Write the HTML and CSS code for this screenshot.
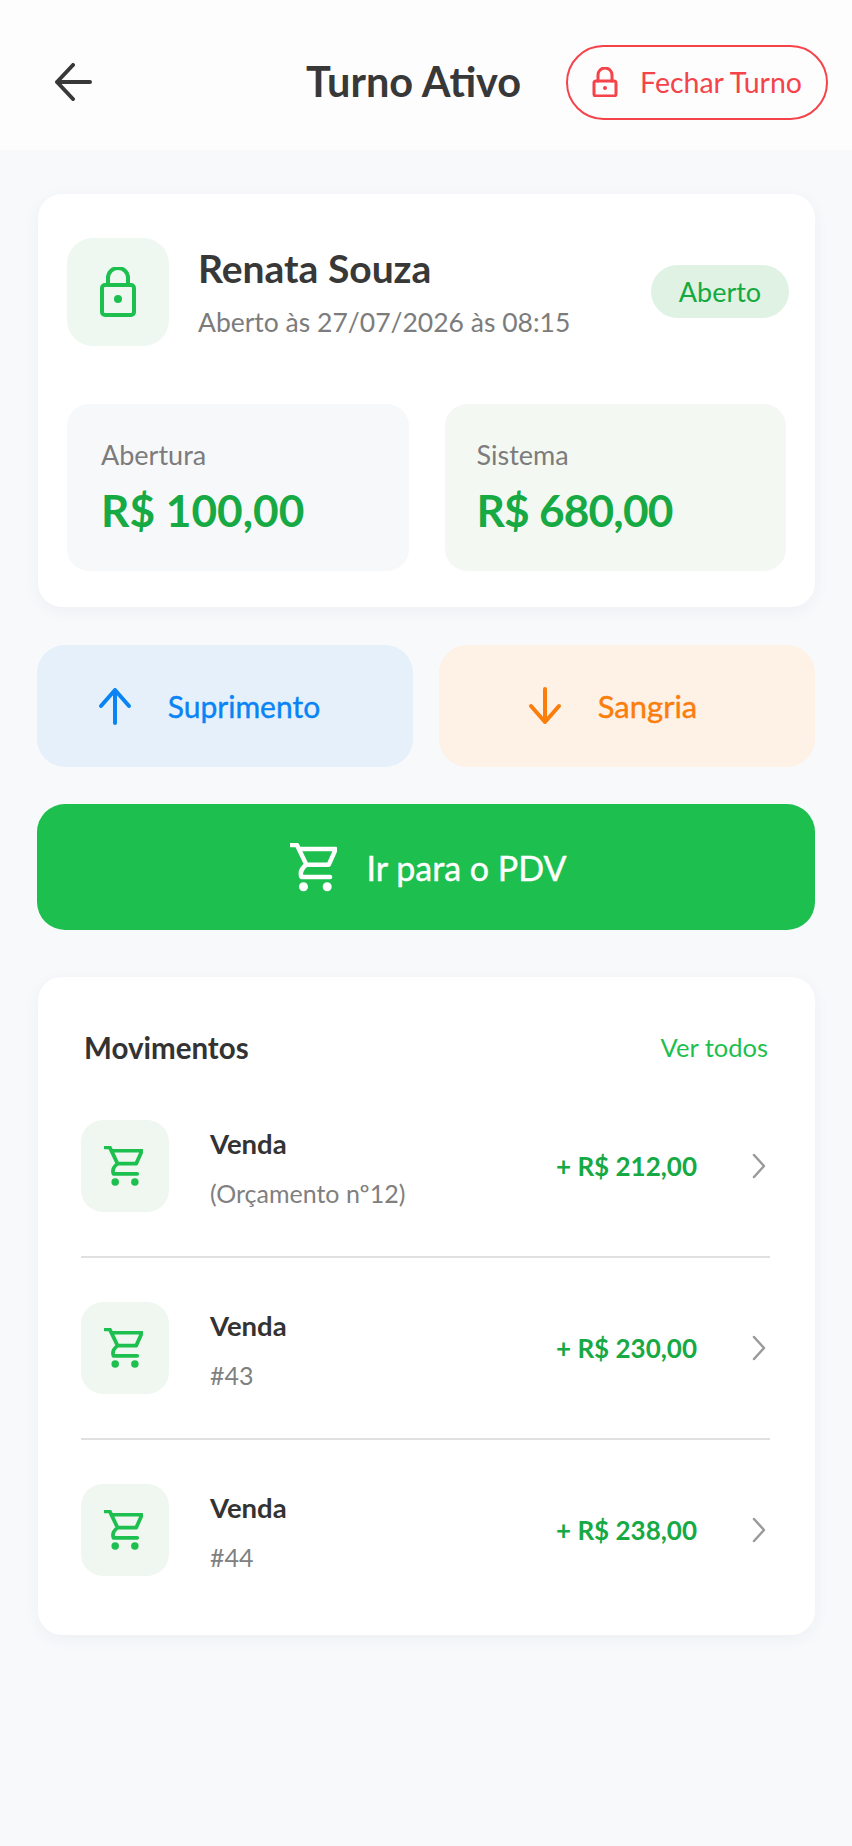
FILE: index.html
```html
<!DOCTYPE html>
<html>
<head>
	<meta charset="utf-8">
	<title>Turno Ativo</title>
	<link rel="stylesheet" href="styles.css">
</head>
<body>
	<header class="topbar">
		<svg class="back" viewBox="0 0 38 38"><path d="M36 19H3M19 2L3 19l16 17"/></svg>
		<h1 class="title">Turno Ativo</h1>
		<div class="close-btn">
			<svg class="lock-sm" viewBox="0 0 26 30"><path d="M6 14V8a7 7 0 0 1 14 0v6"/><rect x="2" y="14" width="22" height="15" rx="2"/><circle class="dot" cx="13" cy="21" r="2"/></svg>
			<span>Fechar Turno</span>
		</div>
	</header>

	<main class="content">
		<section class="card shift">
			<div class="shift-top">
				<div class="lock-box">
					<svg class="lock-lg" viewBox="0 0 36 50"><path d="M8 18V11a10 10 0 0 1 20 0v7"/><rect x="2" y="18" width="32" height="30" rx="3"/><circle class="dot" cx="18" cy="32" r="4"/></svg>
				</div>
				<div class="shift-info">
					<div class="name">Renata Souza</div>
					<div class="since">Aberto às 27/07/2026 às 08:15</div>
				</div>
				<span class="badge">Aberto</span>
			</div>
			<div class="stats">
				<div class="stat">
					<div class="stat-label">Abertura</div>
					<div class="stat-value">R$ 100,00</div>
				</div>
				<div class="stat stat-green">
					<div class="stat-label">Sistema</div>
					<div class="stat-value">R$ 680,00</div>
				</div>
			</div>
		</section>

		<div class="actions">
			<div class="action action-blue">
				<svg viewBox="0 0 34 38"><path d="M17 36V3M3 19L17 3l14 16"/></svg>
				<span>Suprimento</span>
			</div>
			<div class="action action-orange">
				<svg viewBox="0 0 34 38"><path d="M17 2v33M3 19l14 16 14-16"/></svg>
				<span>Sangria</span>
			</div>
		</div>

		<div class="pdv">
			<svg class="cart cart-lg" viewBox="0 0 115 118"><path d="M3 4H17L40 52H95L112 14H22M40 52Q22 66 28 82H98"/><circle class="dot" cx="33" cy="106" r="11"/><circle class="dot" cx="91" cy="106" r="11"/></svg>
			<span>Ir para o PDV</span>
		</div>

		<section class="card moves">
			<div class="moves-head">
				<h2>Movimentos</h2>
				<span class="see-all">Ver todos</span>
			</div>
			<div class="move">
				<div class="cart-box"><svg class="cart" viewBox="0 0 115 118"><path d="M3 4H17L40 52H95L112 14H22M40 52Q22 66 28 82H98"/><circle class="dot" cx="33" cy="106" r="11"/><circle class="dot" cx="91" cy="106" r="11"/></svg></div>
				<div class="move-text">
					<div class="move-title">Venda</div>
					<div class="move-sub">(Orçamento nº12)</div>
				</div>
				<div class="amount">+ R$ 212,00</div>
				<svg class="chev" viewBox="0 0 14 26"><path d="M2 2l10 11L2 24"/></svg>
			</div>
			<div class="move">
				<div class="cart-box"><svg class="cart" viewBox="0 0 115 118"><path d="M3 4H17L40 52H95L112 14H22M40 52Q22 66 28 82H98"/><circle class="dot" cx="33" cy="106" r="11"/><circle class="dot" cx="91" cy="106" r="11"/></svg></div>
				<div class="move-text">
					<div class="move-title">Venda</div>
					<div class="move-sub">#43</div>
				</div>
				<div class="amount">+ R$ 230,00</div>
				<svg class="chev" viewBox="0 0 14 26"><path d="M2 2l10 11L2 24"/></svg>
			</div>
			<div class="move">
				<div class="cart-box"><svg class="cart" viewBox="0 0 115 118"><path d="M3 4H17L40 52H95L112 14H22M40 52Q22 66 28 82H98"/><circle class="dot" cx="33" cy="106" r="11"/><circle class="dot" cx="91" cy="106" r="11"/></svg></div>
				<div class="move-text">
					<div class="move-title">Venda</div>
					<div class="move-sub">#44</div>
				</div>
				<div class="amount">+ R$ 238,00</div>
				<svg class="chev" viewBox="0 0 14 26"><path d="M2 2l10 11L2 24"/></svg>
			</div>
		</section>
	</main>
</body>
</html>
```

FILE: styles.css
```css
*{
    margin: 0;
    padding: 0;
    box-sizing: border-box;
}
html,body{
    height: 100%;
}
body{
    background: #f8f9fb;
    font-family: "Lato", "Liberation Sans", sans-serif;
    color: #333;
}
svg{
    display: block;
    flex: none;
    fill: none;
    stroke-linecap: round;
    stroke-linejoin: round;
}
svg .dot{
    stroke: none;
}

/* top bar */
.topbar{
    height: 150px;
    background: #fdfdfe;
    display: flex;
    align-items: center;
    padding: 14px 24px 0 54px;
}
.back{
    width: 38px;
    height: 38px;
    stroke: #383838;
    stroke-width: 4;
}
.title{
    margin-left: 214px;
    margin-top: -2px;
    font-size: 41.5px;
    font-weight: 700;
    color: #383838;
}
.close-btn{
    margin-left: auto;
    width: 262px;
    height: 75px;
    border: 2px solid #f5434a;
    border-radius: 38px;
    display: flex;
    align-items: center;
    padding-left: 24px;
    gap: 22px;
    color: #f5434a;
    font-size: 28.5px;
}
.lock-sm{
    width: 26px;
    height: 30px;
    stroke: #f5434a;
    stroke-width: 3;
}
.lock-sm .dot{
    fill: #f5434a;
}

.content{
    padding: 44px 37px 0 37px;
    display: flex;
    flex-direction: column;
}
.card{
    background: #fff;
    border-radius: 24px;
    margin: 0 0 0 1px;
    box-shadow: 0 4px 16px rgba(40,50,80,.05);
}

/* shift card */
.shift{
    height: 413px;
    padding: 44px 29px 0 29px;
}
.shift-top{
    display: flex;
    align-items: center;
    height: 108px;
}
.lock-box{
    width: 102px;
    height: 108px;
    background: #eef8f0;
    border-radius: 26px;
    display: flex;
    align-items: center;
    justify-content: center;
}
.lock-lg{
    width: 36px;
    height: 50px;
    stroke: #1dbf4e;
    stroke-width: 4;
}
.lock-lg .dot{
    fill: #1dbf4e;
}
.shift-info{
    margin-left: 29px;
    flex: 1;
}
.name{
    font-size: 39px;
    font-weight: 700;
    color: #383838;
    line-height: 50px;
    margin-top: -2px;
}
.since{
    margin-top: 11px;
    font-size: 26.5px;
    color: #7c7c7c;
    line-height: 36px;
}
.badge{
    width: 138px;
    height: 53px;
    margin: -2px -3px 0 0;
    background: #dff2e3;
    border-radius: 27px;
    color: #16a93f;
    font-size: 27px;
    text-align: center;
    line-height: 53px;
}
.stats{
    margin-top: 58px;
    display: grid;
    grid-template-columns: 1fr 1fr;
    gap: 36px;
}
.stat{
    height: 167px;
    background: #f7f8fa;
    border-radius: 22px;
    padding: 33px 0 0 34px;
}
.stat-green{
    background: #f3f8f3;
    padding-left: 32px;
}
.stat-green .stat-value{
    letter-spacing: -.8px;
}
.stat-label{
    font-size: 27px;
    color: #7c7c7c;
    line-height: 36px;
}
.stat-value{
    margin-top: 9px;
    font-size: 44.2px;
    font-weight: 700;
    color: #16a944;
    line-height: 56px;
}

/* actions */
.actions{
    margin-top: 38px;
    display: grid;
    grid-template-columns: 1fr 1fr;
    gap: 26px;
}
.action{
    height: 122px;
    border-radius: 28px;
    display: flex;
    align-items: center;
    justify-content: center;
    gap: 36px;
    padding-right: 32px;
    font-size: 30px;
    -webkit-text-stroke: .4px;
}
.action svg{
    width: 34px;
    height: 38px;
    stroke-width: 4;
}
.action-blue{
    background: #e5f0fa;
    color: #0a84f5;
}
.action-blue svg{
    stroke: #0a84f5;
}
.action-orange{
    background: #fef1e6;
    color: #fb7d0c;
    font-size: 31px;
    padding-right: 29px;
}
.action-orange svg{
    stroke: #fb7d0c;
}
.pdv{
    margin-top: 37px;
    height: 126px;
    background: #1dbf4e;
    border-radius: 28px;
    display: flex;
    align-items: center;
    justify-content: center;
    gap: 30px;
    padding-left: 4px;
    color: #fff;
    font-size: 34px;
    -webkit-text-stroke: .4px;
}
.cart{
    width: 39px;
    height: 40px;
    stroke: #1dbf4e;
    stroke-width: 11;
}
.cart .dot{
    fill: #1dbf4e;
}
.cart-lg{
    width: 47px;
    height: 49px;
    stroke: #fff;
}
.cart-lg .dot{
    fill: #fff;
}

/* movements */
.moves{
    margin-top: 47px;
    height: 658px;
    padding: 49px 48px 0 46px;
}
.moves-head{
    display: flex;
    justify-content: space-between;
    align-items: center;
    height: 42px;
    margin-bottom: 8px;
}
.moves-head h2{
    font-size: 29.5px;
    font-weight: 700;
    color: #333;
}
.see-all{
    color: #1dbf4e;
    font-size: 25.5px;
    margin-right: -1px;
}
.move{
    height: 182px;
    margin: 0 -3px;
    display: flex;
    align-items: center;
    border-bottom: 2px solid #e0e0e0;
}
.move:last-child{
    height: 180px;
    border-bottom: none;
}
.cart-box{
    width: 88px;
    height: 92px;
    background: #eff7f0;
    border-radius: 22px;
    display: flex;
    align-items: center;
    justify-content: center;
    padding-right: 4px;
}
.move-text{
    margin-left: 41px;
    flex: 1;
    padding-top: 4px;
}
.move-title{
    font-size: 27.5px;
    font-weight: 700;
    color: #333;
    line-height: 38px;
}
.move-sub{
    margin-top: 12px;
    font-size: 25px;
    color: #808080;
    line-height: 36px;
}
.amount{
    width: 146px;
    font-size: 26px;
    font-weight: 700;
    color: #16a944;
}
.chev{
    margin: 0 4px 0 50px;
    width: 14px;
    height: 26px;
    stroke: #9a9a9a;
    stroke-width: 2.5;
}
```
